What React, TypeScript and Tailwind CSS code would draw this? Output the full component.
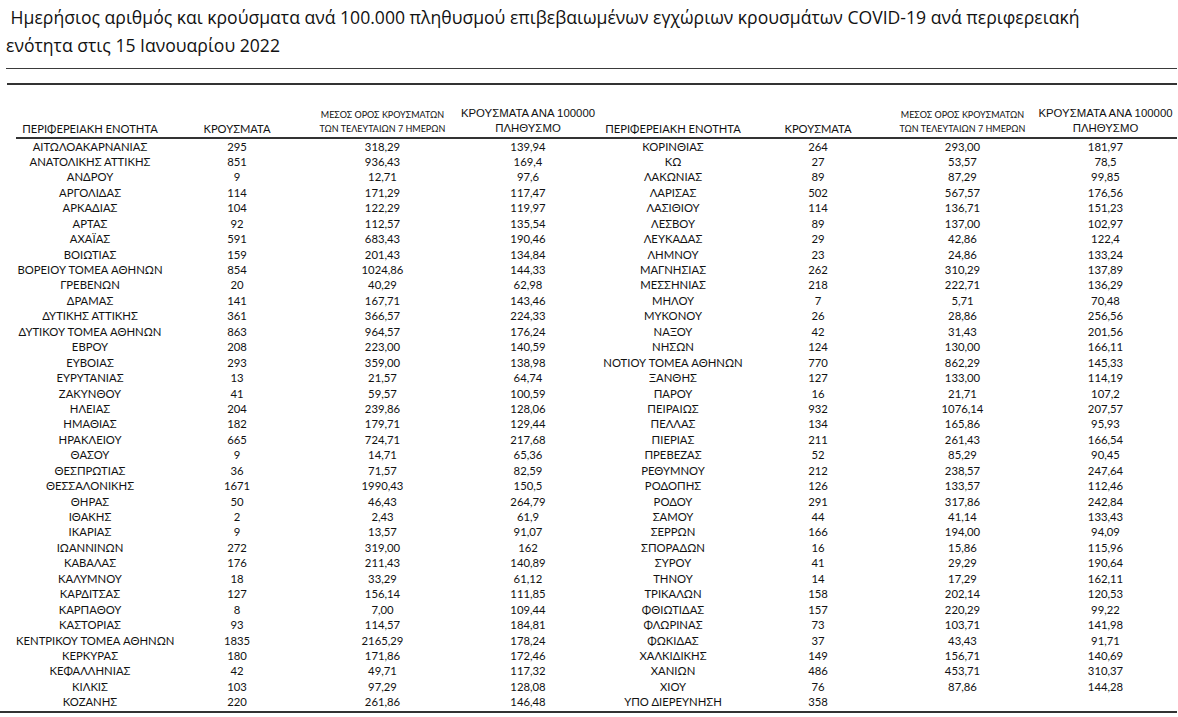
const LEFT: [string, string, string, string][] = [
  ["ΑΙΤΩΛΟΑΚΑΡΝΑΝΙΑΣ", "295", "318,29", "139,94"],
  ["ΑΝΑΤΟΛΙΚΗΣ ΑΤΤΙΚΗΣ", "851", "936,43", "169,4"],
  ["ΑΝΔΡΟΥ", "9", "12,71", "97,6"],
  ["ΑΡΓΟΛΙΔΑΣ", "114", "171,29", "117,47"],
  ["ΑΡΚΑΔΙΑΣ", "104", "122,29", "119,97"],
  ["ΑΡΤΑΣ", "92", "112,57", "135,54"],
  ["ΑΧΑΪΑΣ", "591", "683,43", "190,46"],
  ["ΒΟΙΩΤΙΑΣ", "159", "201,43", "134,84"],
  ["ΒΟΡΕΙΟΥ ΤΟΜΕΑ ΑΘΗΝΩΝ", "854", "1024,86", "144,33"],
  ["ΓΡΕΒΕΝΩΝ", "20", "40,29", "62,98"],
  ["ΔΡΑΜΑΣ", "141", "167,71", "143,46"],
  ["ΔΥΤΙΚΗΣ ΑΤΤΙΚΗΣ", "361", "366,57", "224,33"],
  ["ΔΥΤΙΚΟΥ ΤΟΜΕΑ ΑΘΗΝΩΝ", "863", "964,57", "176,24"],
  ["ΕΒΡΟΥ", "208", "223,00", "140,59"],
  ["ΕΥΒΟΙΑΣ", "293", "359,00", "138,98"],
  ["ΕΥΡΥΤΑΝΙΑΣ", "13", "21,57", "64,74"],
  ["ΖΑΚΥΝΘΟΥ", "41", "59,57", "100,59"],
  ["ΗΛΕΙΑΣ", "204", "239,86", "128,06"],
  ["ΗΜΑΘΙΑΣ", "182", "179,71", "129,44"],
  ["ΗΡΑΚΛΕΙΟΥ", "665", "724,71", "217,68"],
  ["ΘΑΣΟΥ", "9", "14,71", "65,36"],
  ["ΘΕΣΠΡΩΤΙΑΣ", "36", "71,57", "82,59"],
  ["ΘΕΣΣΑΛΟΝΙΚΗΣ", "1671", "1990,43", "150,5"],
  ["ΘΗΡΑΣ", "50", "46,43", "264,79"],
  ["ΙΘΑΚΗΣ", "2", "2,43", "61,9"],
  ["ΙΚΑΡΙΑΣ", "9", "13,57", "91,07"],
  ["ΙΩΑΝΝΙΝΩΝ", "272", "319,00", "162"],
  ["ΚΑΒΑΛΑΣ", "176", "211,43", "140,89"],
  ["ΚΑΛΥΜΝΟΥ", "18", "33,29", "61,12"],
  ["ΚΑΡΔΙΤΣΑΣ", "127", "156,14", "111,85"],
  ["ΚΑΡΠΑΘΟΥ", "8", "7,00", "109,44"],
  ["ΚΑΣΤΟΡΙΑΣ", "93", "114,57", "184,81"],
  ["ΚΕΝΤΡΙΚΟΥ ΤΟΜΕΑ ΑΘΗΝΩΝ", "1835", "2165,29", "178,24"],
  ["ΚΕΡΚΥΡΑΣ", "180", "171,86", "172,46"],
  ["ΚΕΦΑΛΛΗΝΙΑΣ", "42", "49,71", "117,32"],
  ["ΚΙΛΚΙΣ", "103", "97,29", "128,08"],
  ["ΚΟΖΑΝΗΣ", "220", "261,86", "146,48"],
]

const RIGHT: [string, string, string, string][] = [
  ["ΚΟΡΙΝΘΙΑΣ", "264", "293,00", "181,97"],
  ["ΚΩ", "27", "53,57", "78,5"],
  ["ΛΑΚΩΝΙΑΣ", "89", "87,29", "99,85"],
  ["ΛΑΡΙΣΑΣ", "502", "567,57", "176,56"],
  ["ΛΑΣΙΘΙΟΥ", "114", "136,71", "151,23"],
  ["ΛΕΣΒΟΥ", "89", "137,00", "102,97"],
  ["ΛΕΥΚΑΔΑΣ", "29", "42,86", "122,4"],
  ["ΛΗΜΝΟΥ", "23", "24,86", "133,24"],
  ["ΜΑΓΝΗΣΙΑΣ", "262", "310,29", "137,89"],
  ["ΜΕΣΣΗΝΙΑΣ", "218", "222,71", "136,29"],
  ["ΜΗΛΟΥ", "7", "5,71", "70,48"],
  ["ΜΥΚΟΝΟΥ", "26", "28,86", "256,56"],
  ["ΝΑΞΟΥ", "42", "31,43", "201,56"],
  ["ΝΗΣΩΝ", "124", "130,00", "166,11"],
  ["ΝΟΤΙΟΥ ΤΟΜΕΑ ΑΘΗΝΩΝ", "770", "862,29", "145,33"],
  ["ΞΑΝΘΗΣ", "127", "133,00", "114,19"],
  ["ΠΑΡΟΥ", "16", "21,71", "107,2"],
  ["ΠΕΙΡΑΙΩΣ", "932", "1076,14", "207,57"],
  ["ΠΕΛΛΑΣ", "134", "165,86", "95,93"],
  ["ΠΙΕΡΙΑΣ", "211", "261,43", "166,54"],
  ["ΠΡΕΒΕΖΑΣ", "52", "85,29", "90,45"],
  ["ΡΕΘΥΜΝΟΥ", "212", "238,57", "247,64"],
  ["ΡΟΔΟΠΗΣ", "126", "133,57", "112,46"],
  ["ΡΟΔΟΥ", "291", "317,86", "242,84"],
  ["ΣΑΜΟΥ", "44", "41,14", "133,43"],
  ["ΣΕΡΡΩΝ", "166", "194,00", "94,09"],
  ["ΣΠΟΡΑΔΩΝ", "16", "15,86", "115,96"],
  ["ΣΥΡΟΥ", "41", "29,29", "190,64"],
  ["ΤΗΝΟΥ", "14", "17,29", "162,11"],
  ["ΤΡΙΚΑΛΩΝ", "158", "202,14", "120,53"],
  ["ΦΘΙΩΤΙΔΑΣ", "157", "220,29", "99,22"],
  ["ΦΛΩΡΙΝΑΣ", "73", "103,71", "141,98"],
  ["ΦΩΚΙΔΑΣ", "37", "43,43", "91,71"],
  ["ΧΑΛΚΙΔΙΚΗΣ", "149", "156,71", "140,69"],
  ["ΧΑΝΙΩΝ", "486", "453,71", "310,37"],
  ["ΧΙΟΥ", "76", "87,86", "144,28"],
  ["ΥΠΟ ΔΙΕΡΕΥΝΗΣΗ", "358", "", ""],
]

const grid = "grid grid-cols-[148px_146px_145px_146px_144px_146px_143px_143px]"

function HeaderGroup() {
  return (
    <>
      <div className="text-center text-[11.2px] leading-[15px]">ΠΕΡΙΦΕΡΕΙΑΚΗ ΕΝΟΤΗΤΑ</div>
      <div className="text-center text-[11.2px] leading-[15px]">ΚΡΟΥΣΜΑΤΑ</div>
      <div className="text-center text-[9px] leading-[14px]">
        ΜΕΣΟΣ ΟΡΟΣ ΚΡΟΥΣΜΑΤΩΝ
        <br />
        ΤΩΝ ΤΕΛΕΥΤΑΙΩΝ 7 ΗΜΕΡΩΝ
      </div>
      <div className="text-center font-['Liberation_Sans',Arial,sans-serif] text-[11.4px] leading-[15px]">
        ΚΡΟΥΣΜΑΤΑ ΑΝΑ 100000
        <br />
        ΠΛΗΘΥΣΜΟ
      </div>
    </>
  )
}

export default function App() {
  const rows = LEFT.map((l, i) => [...l, ...RIGHT[i]])

  return (
    <div className="w-[1178px] h-[717px] bg-white text-[#111] overflow-hidden">
      <h1 className="pt-[3px] pl-[6px] font-['Open_Sans',sans-serif] text-[17.6px] leading-[28px] font-normal text-[#111]">
        {"\u00A0"}Ημερήσιος αριθμός και κρούσματα ανά 100.000 πληθυσμού επιβεβαιωμένων εγχώριων κρουσμάτων COVID-19 ανά περιφερειακή
        <br />
        ενότητα στις 15 Ιανουαρίου 2022
      </h1>

      <div className="mt-[9px] ml-[6px] w-[1171px] h-px bg-[#3a3a3a]" />
      <div className="mt-[14px] ml-[7px] w-[1170px] h-[1.5px] bg-[#333]" />

      <div className="ml-4 w-[1161px] font-['Lato',sans-serif]">
        <div className={`${grid} h-[54px] items-end pb-[1px] border-b-2 border-[#333]`}>
          <HeaderGroup />
          <HeaderGroup />
        </div>

        {rows.map((r, i) => (
          <div key={i} className={`${grid} h-[15.45px] text-[11.3px] leading-[15.45px]`}>
            {r.map((c, j) => (
              <div key={j} className="text-center whitespace-nowrap">
                {c}
              </div>
            ))}
          </div>
        ))}
      </div>

      <div className="mt-[1px] w-[1177px] h-[2px] bg-[#333]" />
    </div>
  )
}
